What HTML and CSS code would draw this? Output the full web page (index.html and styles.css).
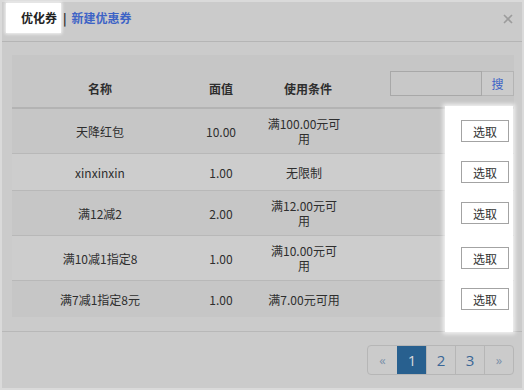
FILE: index.html
```html
<!DOCTYPE html>
<html lang="zh-CN">
<head>
    <meta charset="UTF-8">
    <meta name="viewport" content="width=device-width, initial-scale=1.0">
    <title>优化券</title>
    <link rel="stylesheet" href="styles.css">
</head>
<body>
    <div class="modal">
        <div class="modal-header">
            <span class="tab active">优化券</span>
            <span class="tab-sep">|</span>
            <a class="tab-link" href="#">新建优惠券</a>
            <button class="close-btn" aria-label="关闭">
                <svg width="10" height="10" viewBox="0 0 10 10">
                    <path d="M1 1 L9 9 M9 1 L1 9" stroke="#9c9c9c" stroke-width="1.6" fill="none"/>
                </svg>
            </button>
        </div>

        <div class="modal-body">
            <div class="coupon-panel">
                <!-- guide highlight over the pick column -->
                <div class="spotlight"></div>
                <table class="coupon-table">
                    <colgroup>
                        <col class="col-name">
                        <col class="col-value">
                        <col class="col-cond">
                        <col class="col-action">
                    </colgroup>
                    <thead>
                        <tr>
                            <th>名称</th>
                            <th>面值</th>
                            <th class="cond">使用条件</th>
                            <th class="search-cell">
                                <div class="search-box">
                                    <input class="search-input" type="text">
                                    <button class="search-btn">搜</button>
                                </div>
                            </th>
                        </tr>
                    </thead>
                    <tbody>
                        <tr>
                            <td>天降红包</td>
                            <td>10.00</td>
                            <td class="cond">满100.00元可用</td>
                            <td class="action"><button class="pick-btn">选取</button></td>
                        </tr>
                        <tr>
                            <td>xinxinxin</td>
                            <td>1.00</td>
                            <td class="cond">无限制</td>
                            <td class="action"><button class="pick-btn">选取</button></td>
                        </tr>
                        <tr>
                            <td>满12减2</td>
                            <td>2.00</td>
                            <td class="cond">满12.00元可用</td>
                            <td class="action"><button class="pick-btn">选取</button></td>
                        </tr>
                        <tr>
                            <td>满10减1指定8</td>
                            <td>1.00</td>
                            <td class="cond">满10.00元可用</td>
                            <td class="action"><button class="pick-btn">选取</button></td>
                        </tr>
                        <tr>
                            <td>满7减1指定8元</td>
                            <td>1.00</td>
                            <td class="cond">满7.00元可用</td>
                            <td class="action"><button class="pick-btn">选取</button></td>
                        </tr>
                    </tbody>
                </table>
            </div>
        </div>

        <div class="modal-footer">
            <ul class="pagination">
                <li class="page-item arrow">&laquo;</li>
                <li class="page-item current">1</li>
                <li class="page-item">2</li>
                <li class="page-item">3</li>
                <li class="page-item arrow">&raquo;</li>
            </ul>
        </div>
    </div>
</body>
</html>
```

FILE: styles.css
```css
* {
    margin: 0;
    padding: 0;
    box-sizing: border-box;
}

body {
    font-family: "Noto Sans CJK SC", "Noto Sans", sans-serif;
    font-size: 12px;
    color: #2e2e2e;
    background: #cbcbcb;
}

.modal {
    width: 524px;
    height: 390px;
    border: 2px solid #dadada;
    background: #cbcbcb;
    display: flex;
    flex-direction: column;
}

/* header with tabs */
.modal-header {
    height: 40px;
    padding: 1px 9px 0 4px;
    border-bottom: 1px solid #b5b5b5;
    display: flex;
    align-items: flex-start;
}

.tab,
.tab-sep,
.tab-link,
.close-btn {
    height: 30px;
    line-height: 30px;
    font-weight: bold;
    font-size: 12px;
}

.tab.active {
    padding: 0 4px 0 15px;
    background: #fff;
    color: #222;
    box-shadow: 0 0 3px 1px rgba(255, 255, 255, 0.8);
}

.tab-sep {
    margin: 0 5px 0 2px;
    color: #2a2a2a;
}

.tab-link {
    color: #3d63c6;
    text-decoration: none;
}

.close-btn {
    margin-left: auto;
    border: none;
    background: none;
    display: flex;
    align-items: center;
    padding-top: 1px;
}

/* body and table */
.modal-body {
    padding: 13px 8px 14px 10px;
}

.coupon-panel {
    position: relative;
}

.spotlight {
    position: absolute;
    left: 433px;
    top: 51px;
    width: 68px;
    height: 226px;
    background: #fff;
    box-shadow: 0 0 4px 2px rgba(255, 255, 255, 0.75);
    z-index: 1;
}

.coupon-table {
    width: 100%;
    table-layout: fixed;
    border-collapse: collapse;
}

.col-name { width: 176px; }
.col-value { width: 66px; }
.col-cond { width: 100px; }

.coupon-table th {
    background: #c6c6c6;
    font-weight: bold;
    line-height: 15px;
    padding: 26px 0 11px;
    vertical-align: bottom;
    border-bottom: 2px solid #b3b3b3;
}

.coupon-table td {
    line-height: 15px;
    padding: 7px 0;
    text-align: center;
    vertical-align: middle;
    border-top: 1px solid #b8b8b8;
}

.coupon-table tbody tr:nth-child(odd) td {
    background: #c6c6c6;
}

.coupon-table tbody tr:nth-child(even) td {
    background: #cdcdcd;
}

.coupon-table .cond {
    padding-left: 12px;
    padding-right: 12px;
}

.coupon-table th.cond {
    padding-left: 20px;
    padding-right: 12px;
}

.coupon-table th.search-cell {
    padding: 0 0 11px;
}

.search-box {
    display: flex;
    justify-content: flex-end;
}

.search-input {
    width: 92px;
    height: 25px;
    border: 1px solid #a8a8a8;
    background: #c8c8c8;
}

.search-btn {
    width: 32px;
    height: 25px;
    border: 1px solid #b4b4b4;
    border-left: none;
    background: #cbcbcb;
    color: #3d63c6;
    font-family: inherit;
    font-size: 12px;
}

.coupon-table td.action {
    text-align: right;
    padding-right: 5px;
}

.pick-btn {
    position: relative;
    z-index: 2;
    width: 48px;
    height: 22px;
    border: 1px solid #a3a3a3;
    background: #fff;
    color: #333;
    font-family: inherit;
    font-size: 12px;
    vertical-align: middle;
}

/* footer pagination */
.modal-footer {
    border-top: 1px solid #b8b8b8;
    padding: 13px 8px 0 0;
    display: flex;
    justify-content: flex-end;
}

.pagination {
    list-style: none;
    display: flex;
    border: 1px solid #b6b6b6;
    border-radius: 4px;
    overflow: hidden;
}

.page-item {
    width: 29px;
    height: 28px;
    line-height: 28px;
    text-align: center;
    font-family: "Open Sans", sans-serif;
    font-size: 15px;
    color: #3a6797;
    border-left: 1px solid #b6b6b6;
}

.page-item:first-child {
    border-left: none;
}

.page-item.arrow {
    color: #7b91a9;
    font-size: 13px;
}

.page-item.current {
    background: #28608f;
    color: #d9d9d9;
    border-left-color: #28608f;
}
```
